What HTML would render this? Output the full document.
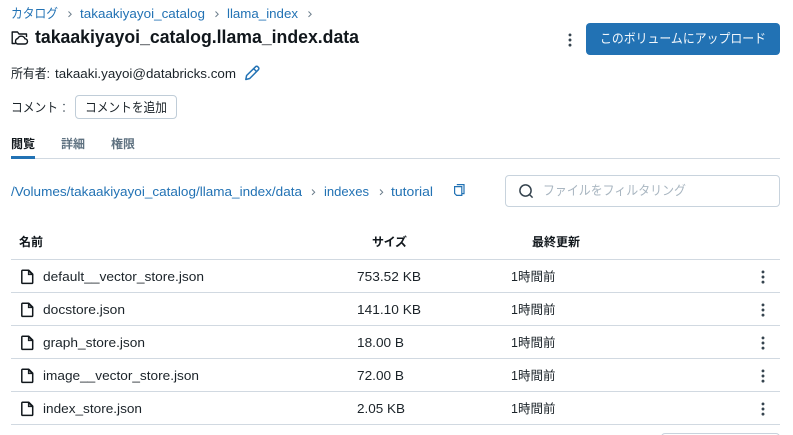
<!DOCTYPE html>
<html lang="ja"><head><meta charset="utf-8"><title>takaakiyayoi_catalog.llama_index.data</title>
<style>
html,body{margin:0;padding:0;background:#fff;width:793px;height:435px;overflow:hidden}
svg{display:block}
text{font-family:"Liberation Sans","Noto Sans CJK JP",sans-serif;font-size:13px;fill:#1b2329}
.l{fill:#2272b4}
.s{fill:#5f7281;font-weight:700}
.b{font-weight:700;fill:#11171c}
.t{font-size:12.5px}
.ln{stroke:#d1d9e1;stroke-width:1;fill:none}
.ch{stroke:#6b7d8b;stroke-width:1;fill:none}
.ic{stroke:#11171c;stroke-width:1.5;fill:none;stroke-linejoin:round}
</style></head><body>
<svg width="793" height="435" viewBox="0 0 793 435" xmlns="http://www.w3.org/2000/svg">
<defs>
<g id="dots"><circle cx="0" cy="-5.1" r="1.45" fill="#36444f"/><circle cx="0" cy="0" r="1.45" fill="#36444f"/><circle cx="0" cy="5.1" r="1.45" fill="#36444f"/></g>
<g id="file"><path class="ic" d="M0.8 1.5A0.7 0.7 0 0 1 1.5 0.8H7.8L11.7 4.7V13.2A0.7 0.7 0 0 1 11 13.9H1.5A0.7 0.7 0 0 1 0.8 13.2Z"/><path d="M7.4 1.2V5.1H11.3Z" fill="#11171c" fill-opacity=".55" stroke="#11171c" stroke-width="1"/></g>
</defs>
<!-- breadcrumb -->
<text class="l" x="11" y="18" textLength="47" lengthAdjust="spacingAndGlyphs">カタログ</text>
<path class="ch" d="M68.5 11.5l2.7 2.7-2.7 2.7M215.5 11.5l2.7 2.7-2.7 2.7M308.5 11.5l2.7 2.7-2.7 2.7"/>
<text class="l" x="80" y="18" textLength="125" lengthAdjust="spacingAndGlyphs">takaakiyayoi_catalog</text>
<text class="l" x="227" y="18" textLength="71" lengthAdjust="spacingAndGlyphs">llama_index</text>
<!-- title -->
<path d="M15.5 43.5H12.2V32H17.5L19 34H26.5V37" fill="none" stroke="#11171c" stroke-width="1.4" stroke-linejoin="round"/>
<path d="M17.5 44H24.8A2.6 2.6 0 0 0 25 38.8A3.9 3.9 0 0 0 17.7 38.6A2.8 2.8 0 0 0 17.5 44Z" fill="none" stroke="#11171c" stroke-width="1.4"/>
<text class="b" x="35" y="43" style="font-size:18px" textLength="324" lengthAdjust="spacingAndGlyphs">takaakiyayoi_catalog.llama_index.data</text>
<!-- actions -->
<use href="#dots" x="570" y="40"/>
<rect x="586" y="23" width="194" height="32" rx="4" fill="#2272b4"/>
<text x="600" y="43" style="fill:#f2f7fb" textLength="166" lengthAdjust="spacingAndGlyphs">このボリュームにアップロード</text>
<!-- owner -->
<text x="11" y="78" textLength="39" lengthAdjust="spacingAndGlyphs">所有者:</text>
<text x="55" y="78" textLength="181" lengthAdjust="spacingAndGlyphs">takaaki.yayoi@databricks.com</text>
<path d="M245.8 79.5L246.6 75.5L255.5 66.8A1.6 1.6 0 0 1 257.8 66.8L258.4 67.4A1.6 1.6 0 0 1 258.4 69.7L249.7 78.5Z M253.6 68.6L256.6 71.6" fill="none" stroke="#2272b4" stroke-width="1.5" stroke-linejoin="round"/>
<!-- comment -->
<text x="11" y="112" textLength="47" lengthAdjust="spacingAndGlyphs">コメント</text>
<circle cx="64" cy="104.5" r="0.8" fill="#36444f"/><circle cx="64" cy="111" r="0.8" fill="#36444f"/>
<rect x="75.5" y="95.5" width="101" height="23" rx="3.5" fill="#fff" stroke="#c0cdd8"/>
<text x="85" y="112" textLength="82" lengthAdjust="spacingAndGlyphs">コメントを追加</text>
<!-- tabs -->
<text class="b" x="11" y="148" style="font-size:12px" textLength="24">閲覧</text>
<text class="s" x="61" y="148" style="font-size:12px" textLength="24">詳細</text>
<text class="s" x="111" y="148" style="font-size:12px" textLength="24">権限</text>
<line class="ln" x1="11" y1="158.5" x2="780" y2="158.5"/>
<rect x="11" y="156" width="24" height="3" fill="#2272b4"/>
<!-- path -->
<text class="l" x="11" y="196" textLength="291" lengthAdjust="spacingAndGlyphs">/Volumes/takaakiyayoi_catalog/llama_index/data</text>
<path class="ch" d="M312 189.5l2.7 2.7-2.7 2.7M380 189.5l2.7 2.7-2.7 2.7"/>
<text class="l" x="324" y="196" textLength="45" lengthAdjust="spacingAndGlyphs">indexes</text>
<text class="l" x="391" y="196" textLength="42" lengthAdjust="spacingAndGlyphs">tutorial</text>
<path d="M456.8 184.6H464V193.6H461.8M454.6 186.6H461.8V195.4H456.6L454.6 193.4Z" fill="none" stroke="#2272b4" stroke-width="1.2"/>
<!-- search -->
<rect x="505.5" y="175.5" width="274" height="31" rx="3.5" fill="#fff" stroke="#c8d3dd"/>
<circle cx="525.5" cy="190.5" r="5.6" fill="none" stroke="#36444f" stroke-width="1.5"/>
<path d="M529.5 194.5L532.6 197.6" stroke="#36444f" stroke-width="1.5"/>
<text x="543" y="195" style="fill:#a9b6c1" textLength="143" lengthAdjust="spacingAndGlyphs">ファイルをフィルタリング</text>
<!-- table header -->
<text class="b" x="19" y="246" style="font-size:12px" textLength="24">名前</text>
<text class="b" x="372" y="246" style="font-size:12px" textLength="35">サイズ</text>
<text class="b" x="532" y="246" style="font-size:12px" textLength="48">最終更新</text>
<path class="ln" d="M11 259.5H780M11 292.5H780M11 325.5H780M11 358.5H780M11 391.5H780M11 424.5H780"/>
<!-- rows -->
<use href="#file" x="21" y="269.5"/>
<text x="43" y="281" textLength="161" lengthAdjust="spacingAndGlyphs">default__vector_store.json</text>
<text x="357" y="281" textLength="64" lengthAdjust="spacingAndGlyphs">753.52 KB</text>
<text class="t" x="511" y="281">1時間前</text>
<use href="#dots" x="763" y="277"/>
<use href="#file" x="21" y="302.5"/>
<text x="43" y="314" textLength="82" lengthAdjust="spacingAndGlyphs">docstore.json</text>
<text x="357" y="314" textLength="64" lengthAdjust="spacingAndGlyphs">141.10 KB</text>
<text class="t" x="511" y="314">1時間前</text>
<use href="#dots" x="763" y="310"/>
<use href="#file" x="21" y="335.5"/>
<text x="43" y="347" textLength="102" lengthAdjust="spacingAndGlyphs">graph_store.json</text>
<text x="357" y="347" textLength="47" lengthAdjust="spacingAndGlyphs">18.00 B</text>
<text class="t" x="511" y="347">1時間前</text>
<use href="#dots" x="763" y="343"/>
<use href="#file" x="21" y="368.5"/>
<text x="43" y="380" textLength="156" lengthAdjust="spacingAndGlyphs">image__vector_store.json</text>
<text x="357" y="380" textLength="47" lengthAdjust="spacingAndGlyphs">72.00 B</text>
<text class="t" x="511" y="380">1時間前</text>
<use href="#dots" x="763" y="376"/>
<use href="#file" x="21" y="401.5"/>
<text x="43" y="413" textLength="99" lengthAdjust="spacingAndGlyphs">index_store.json</text>
<text x="357" y="413" textLength="48" lengthAdjust="spacingAndGlyphs">2.05 KB</text>
<text class="t" x="511" y="413">1時間前</text>
<use href="#dots" x="763" y="409"/>
<!-- bottom box -->
<rect x="661.5" y="433.5" width="118" height="20" rx="3.5" fill="#fff" stroke="#c8d3dd"/>
</svg>
</body></html>
